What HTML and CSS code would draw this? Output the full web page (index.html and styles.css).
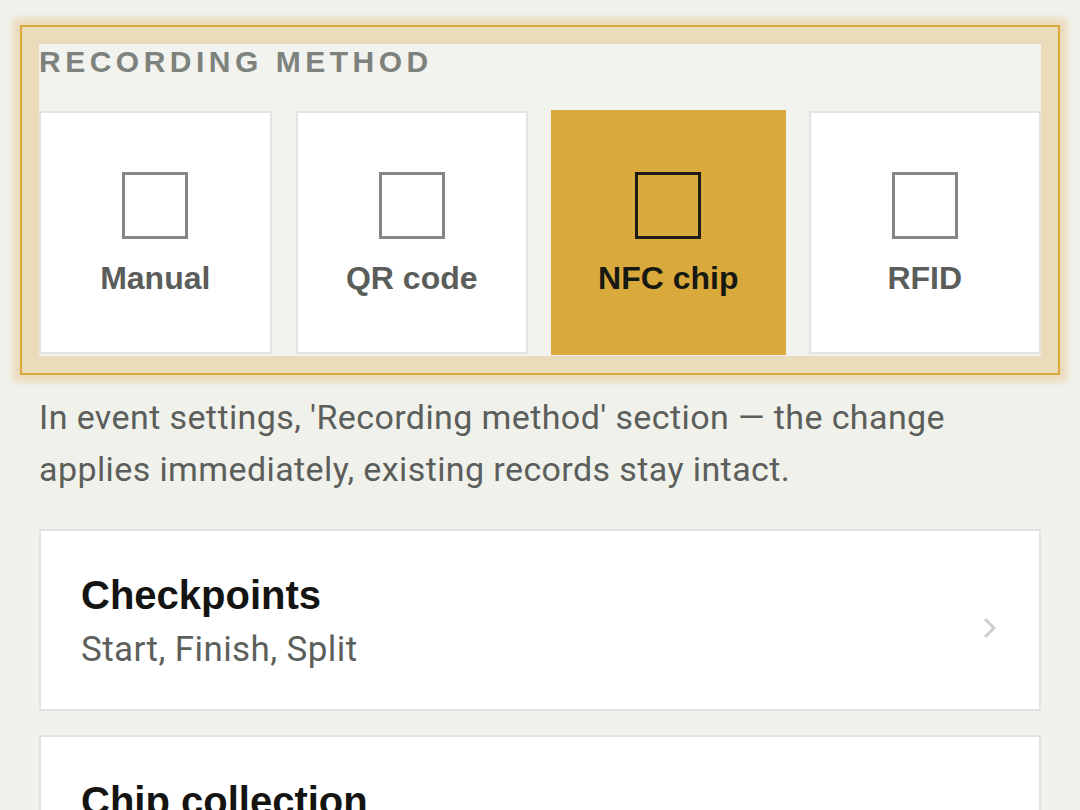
FILE: index.html
```html
<!DOCTYPE html>
<html lang="en">
<head>
<meta charset="utf-8">
<title>Recording method</title>
<link rel="stylesheet" href="styles.css">
</head>
<body>
<main class="page">
  <section class="method highlight">
    <h2 class="method-label">Recording method</h2>
    <div class="tiles">
      <button class="tile"><span class="tile-icon"></span><span class="tile-name">Manual</span></button>
      <button class="tile"><span class="tile-icon"></span><span class="tile-name">QR code</span></button>
      <button class="tile tile-active"><span class="tile-icon"></span><span class="tile-name">NFC chip</span></button>
      <button class="tile"><span class="tile-icon"></span><span class="tile-name">RFID</span></button>
    </div>
  </section>
  <p class="hint">In event settings, 'Recording method' section — the change applies immediately, existing records stay intact.</p>
  <a class="row-card">
    <div class="row-text">
      <div class="row-title">Checkpoints</div>
      <div class="row-sub">Start, Finish, Split</div>
    </div>
    <svg class="chev" width="14" height="22" viewBox="0 0 14 22"><polyline points="2,2 11,11 2,20" fill="none" stroke="#cfcfca" stroke-width="3"/></svg>
  </a>
  <a class="row-card">
    <div class="row-text">
      <div class="row-title">Chip collection</div>
      <div class="row-sub">Return at finish</div>
    </div>
    <svg class="chev" width="14" height="22" viewBox="0 0 14 22"><polyline points="2,2 11,11 2,20" fill="none" stroke="#cfcfca" stroke-width="3"/></svg>
  </a>
</main>
</body>
</html>
```
FILE: styles.css
```css
* { box-sizing: border-box; }
html, body { margin: 0; padding: 0; }
body {
  background: #f1f1ec;
  font-family: Roboto, "Liberation Sans", sans-serif;
  color: #5b5e5a;
  overflow: hidden;
}
.page {
  padding: 44px 39px 0 39px;
}
.method {
  background: #f2f2ee;
  padding-bottom: 2px;
}
.highlight {
  outline: 2px solid #dba93a;
  outline-offset: 17px;
  box-shadow: 0 0 6px 26px rgba(226, 196, 128, 0.45);
}
.method-label {
  margin: 0 0 31px 0;
  font-family: "Liberation Sans", Arial, sans-serif;
  font-weight: 700;
  font-size: 30px;
  line-height: 36px;
  letter-spacing: 0.15em;
  text-transform: uppercase;
  color: #7e827d;
}
.tiles {
  display: grid;
  grid-template-columns: repeat(4, 1fr);
  gap: 24px;
}
.tile {
  height: 243px;
  background: #ffffff;
  border: 2px solid #e3e3df;
  display: flex;
  flex-direction: column;
  align-items: center;
  justify-content: center;
  gap: 19px;
  padding: 4px 0 0 0;
  margin: 0;
  font: inherit;
  cursor: pointer;
}
.tile-icon {
  display: block;
  width: 66px;
  height: 67px;
  border: 3px solid #848783;
}
.tile-name {
  font-family: "Liberation Sans", Arial, sans-serif;
  font-weight: 700;
  font-size: 32px;
  line-height: 40px;
  color: #5a5d5a;
}
.tile-active {
  background: #d9a93b;
  border-color: #d9a93b;
  margin: -1px;
  height: 245px;
}
.tile-active .tile-icon { border-color: #1d1d16; }
.tile-active .tile-name { color: #181812; }
.hint {
  max-width: 960px;
  margin: 35px 0 34px 0;
  font-size: 34px;
  letter-spacing: 0.4px;
  line-height: 52px;
  color: #5b5e5a;
}
.row-card {
  display: flex;
  align-items: center;
  justify-content: space-between;
  background: #ffffff;
  border: 2px solid #e2e2de;
  padding: 41px 42px 37px 40px;
  margin-bottom: 24px;
}
.row-title {
  font-family: "Liberation Sans", Arial, sans-serif;
  font-weight: 700;
  font-size: 40px;
  line-height: 46px;
  color: #141412;
}
.row-sub {
  margin-top: 10px;
  font-size: 35px;
  letter-spacing: 0.4px;
  line-height: 44px;
  color: #5c5f5b;
}
.chev { margin-top: 12px; flex: none; }
```
